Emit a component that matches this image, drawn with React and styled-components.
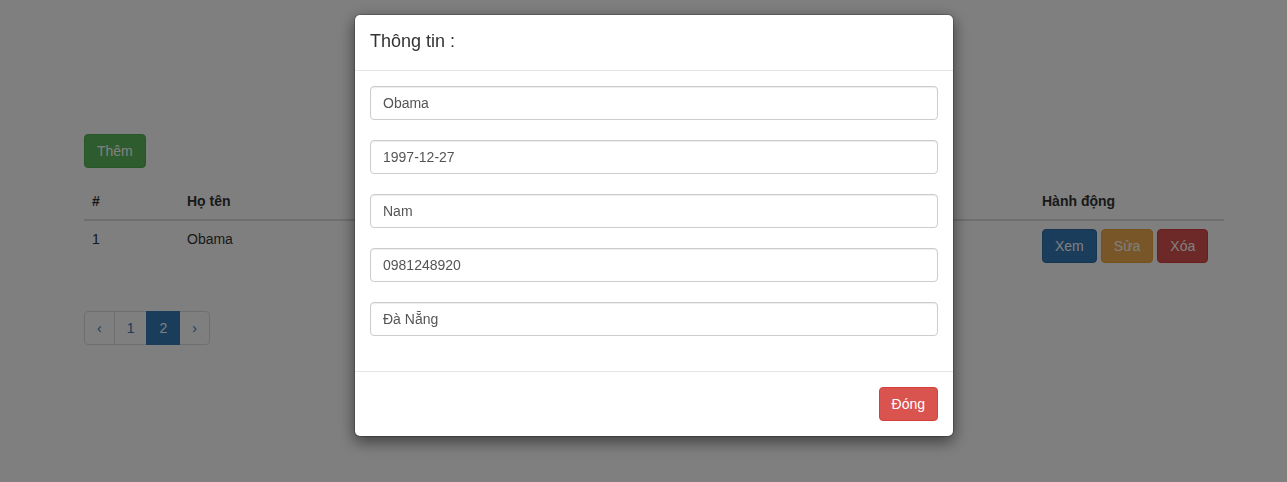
import styled, { createGlobalStyle, css } from "styled-components";

const GlobalStyle = createGlobalStyle`
  html, body {
    margin: 0;
    padding: 0;
    background: #fff;
  }
  body {
    font-family: "Liberation Sans", Arial, Helvetica, sans-serif;
    font-size: 14px;
    line-height: 1.42857;
    color: #333;
  }
  * {
    box-sizing: border-box;
  }
`;

const variants = {
  success: css`
    background: #5cb85c;
    border-color: #4cae4c;
  `,
  primary: css`
    background: #337ab7;
    border-color: #2e6da4;
  `,
  warning: css`
    background: #f0ad4e;
    border-color: #eea236;
  `,
  danger: css`
    background: #d9534f;
    border-color: #d43f3a;
  `,
};

const Container = styled.div`
  width: 1140px;
  margin-left: 84px;
  padding-top: 134px;
`;

const Button = styled.button`
  display: inline-block;
  height: 34px;
  padding: 6px 12px;
  font-family: inherit;
  font-size: 14px;
  line-height: 20px;
  color: #fff;
  border: 1px solid transparent;
  border-radius: 4px;
  cursor: pointer;
  ${(p) => variants[p.$variant]}
`;

const Actions = styled.div`
  display: flex;
  gap: 4px;
`;

const Table = styled.table`
  width: 100%;
  margin-top: 15px;
  border-collapse: collapse;
  border-spacing: 0;
`;

const Th = styled.th`
  text-align: left;
  padding: 8px;
  line-height: 20px;
  font-weight: bold;
  border-bottom: 2px solid #ddd;
  width: ${(p) => p.$w}px;
`;

const Td = styled.td`
  padding: 8px;
  line-height: 20px;
  vertical-align: top;
  border-top: 1px solid #ddd;
  color: #333;
`;

const Pagination = styled.ul`
  display: flex;
  margin: 40px 0 20px;
  padding: 0;
  list-style: none;
`;

const PageItem = styled.li`
  margin-left: -1px;
  padding: 6px 12px;
  line-height: 20px;
  border: 1px solid #ddd;
  color: ${(p) => (p.$active ? "#fff" : "#337ab7")};
  background: ${(p) => (p.$active ? "#337ab7" : "#fff")};
  border-color: ${(p) => (p.$active ? "#337ab7" : "#ddd")};
  position: relative;
  z-index: ${(p) => (p.$active ? 2 : 0)};
  &:first-child {
    margin-left: 0;
    border-radius: 4px 0 0 4px;
  }
  &:last-child {
    border-radius: 0 4px 4px 0;
  }
`;

const Backdrop = styled.div`
  position: fixed;
  inset: 0;
  background: rgba(0, 0, 0, 0.5);
  z-index: 10;
`;

const Dialog = styled.div`
  position: fixed;
  top: 14px;
  left: 354px;
  width: 600px;
  z-index: 20;
  background: #fff;
  border: 1px solid rgba(0, 0, 0, 0.2);
  border-radius: 6px;
  box-shadow: 0 5px 15px rgba(0, 0, 0, 0.5);
  background-clip: padding-box;
`;

const Header = styled.div`
  padding: 14px 15px 15px;
  border-bottom: 1px solid #e5e5e5;
`;

const Title = styled.h4`
  margin: 0;
  font-size: 18px;
  font-weight: 500;
  line-height: 1.42857;
  color: #333;
`;

const Body = styled.div`
  padding: 15px 15px 35px;
  display: flex;
  flex-direction: column;
  gap: 20px;
`;

const Input = styled.input`
  display: block;
  width: 100%;
  height: 34px;
  padding: 6px 12px;
  font-family: inherit;
  font-size: 14px;
  line-height: 20px;
  color: #555;
  background: #fff;
  border: 1px solid #ccc;
  border-radius: 4px;
  box-shadow: inset 0 1px 1px rgba(0, 0, 0, 0.075);
  outline: none;
`;

const Footer = styled.div`
  display: flex;
  justify-content: flex-end;
  padding: 15px;
  border-top: 1px solid #e5e5e5;
`;

const columns = [
  { label: "#", w: 95 },
  { label: "Họ tên", w: 200 },
  { label: "Ngày sinh", w: 140 },
  { label: "Giới tính", w: 100 },
  { label: "Số điện thoại", w: 160 },
  { label: "Địa chỉ", w: 255 },
  { label: "Hành động", w: 190 },
];

const person = {
  name: "Obama",
  birthday: "1997-12-27",
  gender: "Nam",
  phone: "0981248920",
  address: "Đà Nẵng",
};

export default function App() {
  return (
    <>
      <GlobalStyle />
      <Container>
        <Button $variant="success">Thêm</Button>
        <Table>
          <thead>
            <tr>
              {columns.map((c) => (
                <Th key={c.label} $w={c.w}>
                  {c.label}
                </Th>
              ))}
            </tr>
          </thead>
          <tbody>
            <tr>
              <Td>1</Td>
              <Td>{person.name}</Td>
              <Td>{person.birthday}</Td>
              <Td>{person.gender}</Td>
              <Td>{person.phone}</Td>
              <Td>{person.address}</Td>
              <Td>
                <Actions>
                  <Button $variant="primary">Xem</Button>
                  <Button $variant="warning">Sửa</Button>
                  <Button $variant="danger">Xóa</Button>
                </Actions>
              </Td>
            </tr>
          </tbody>
        </Table>
        <Pagination>
          <PageItem>‹</PageItem>
          <PageItem>1</PageItem>
          <PageItem $active>2</PageItem>
          <PageItem>›</PageItem>
        </Pagination>
      </Container>

      <Backdrop />
      <Dialog>
        <Header>
          <Title>Thông tin :</Title>
        </Header>
        <Body>
          <Input readOnly value={person.name} />
          <Input readOnly value={person.birthday} />
          <Input readOnly value={person.gender} />
          <Input readOnly value={person.phone} />
          <Input readOnly value={person.address} />
        </Body>
        <Footer>
          <Button $variant="danger">Đóng</Button>
        </Footer>
      </Dialog>
    </>
  );
}
